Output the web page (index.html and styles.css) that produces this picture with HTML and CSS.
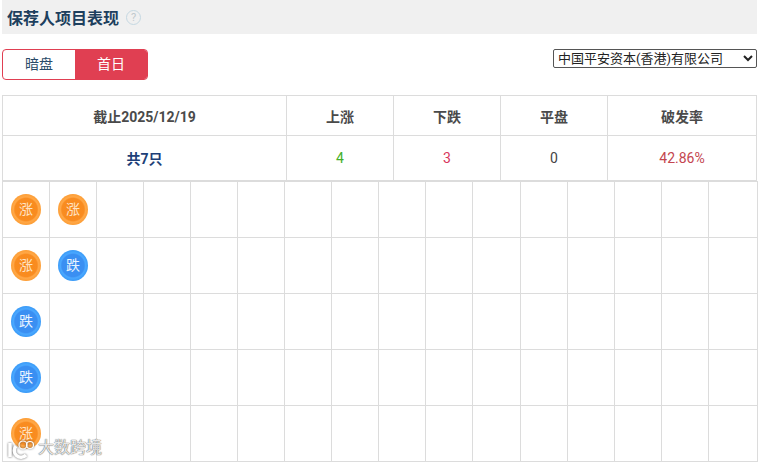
FILE: index.html
```html
<!DOCTYPE html>
<html lang="en">
<head>
	<meta charset="UTF-8">
	<title>保荐人项目表现</title>
	<link rel="stylesheet" href="styles.css">
</head>
<body>
	<div class="title-bar">
		<h3 class="title">保荐人项目表现</h3>
		<span class="help">?</span>
	</div>
	<div class="tools">
		<div class="tabs">
			<div class="tab">暗盘</div>
			<div class="tab on">首日</div>
		</div>
		<select class="sponsor">
			<option>中国平安资本(香港)有限公司</option>
		</select>
	</div>
	<table class="stats">
		<tr>
			<th class="c1">截止2025/12/19</th>
			<th class="c2">上涨</th>
			<th class="c2">下跌</th>
			<th class="c2">平盘</th>
			<th>破发率</th>
		</tr>
		<tr>
			<td class="total">共7只</td>
			<td class="green">4</td>
			<td class="pink">3</td>
			<td>0</td>
			<td class="red">42.86%</td>
		</tr>
	</table>
	<table class="dots">
		<tr>
			<td><span class="dot up">涨</span></td><td><span class="dot up">涨</span></td>
			<td></td><td></td><td></td><td></td><td></td><td></td><td></td><td></td><td></td><td></td><td></td><td></td><td></td><td></td>
		</tr>
		<tr>
			<td><span class="dot up">涨</span></td><td><span class="dot down">跌</span></td>
			<td></td><td></td><td></td><td></td><td></td><td></td><td></td><td></td><td></td><td></td><td></td><td></td><td></td><td></td>
		</tr>
		<tr>
			<td><span class="dot down">跌</span></td><td></td>
			<td></td><td></td><td></td><td></td><td></td><td></td><td></td><td></td><td></td><td></td><td></td><td></td><td></td><td></td>
		</tr>
		<tr>
			<td><span class="dot down">跌</span></td><td></td>
			<td></td><td></td><td></td><td></td><td></td><td></td><td></td><td></td><td></td><td></td><td></td><td></td><td></td><td></td>
		</tr>
		<tr>
			<td><span class="dot up">涨</span></td><td></td>
			<td></td><td></td><td></td><td></td><td></td><td></td><td></td><td></td><td></td><td></td><td></td><td></td><td></td><td></td>
		</tr>
	</table>
	<div class="mark">
		<svg class="mark-logo" width="28" height="22" viewBox="0 0 28 22" fill="none" stroke="#fff" stroke-width="3.5">
			<path d="M3 6v14" />
			<path d="M9 9a6.500 6.500 0 0 0 10 9" />
			<circle cx="16" cy="8" r="4" stroke-width="1.2" />
			<circle cx="23" cy="8" r="3.500" stroke-width="1.2" />
		</svg>
		<span>大数跨境</span>
	</div>
</body>
</html>
```
FILE: styles.css
```css
html, body {
	height: 463px;
	overflow: hidden;
}
body {
	position: relative;
	margin: 0;
	padding: 0 10px 0 2px;
	background: #fff;
	font-family: Roboto, "Noto Sans CJK SC", sans-serif;
	font-size: 14px;
	color: #444;
}
.title-bar {
	display: flex;
	align-items: center;
	gap: 7px;
	height: 34px;
	padding-left: 5px;
	background: #f0f0f0;
}
.title {
	margin: 0;
	font-size: 16px;
	font-weight: 700;
	color: #1d3f5e;
}
.help {
	width: 13px;
	height: 13px;
	border: 1px solid #c5d8e2;
	border-radius: 50%;
	font-size: 11px;
	line-height: 13px;
	text-align: center;
	color: #c0c8cc;
}
.tools {
	display: flex;
	justify-content: space-between;
	align-items: flex-start;
	margin-top: 15px;
}
.tabs {
	display: flex;
	width: 146px;
	height: 31px;
	box-sizing: border-box;
	border: 1px solid #e03f52;
	border-radius: 4px;
	overflow: hidden;
}
.tab {
	flex: 1;
	font-size: 14px;
	line-height: 29px;
	text-align: center;
	color: #2a4a68;
}
.tab.on {
	background: #e03f52;
	color: #fff;
}
.sponsor {
	width: 204px;
	height: 19px;
	padding: 0;
	background: #fff;
	border: 1px solid #555;
	border-radius: 2px;
	font-family: Roboto, "Noto Sans CJK SC", sans-serif;
	font-size: 13px;
	color: #222;
}
table {
	width: 755px;
	table-layout: fixed;
	border-collapse: collapse;
}
td, th {
	border: 1px solid #dcdcdc;
	padding: 0;
	text-align: center;
}
.stats {
	margin-top: 15px;
}
.stats th {
	height: 39px;
	font-size: 14px;
	font-weight: 700;
	color: #4a4a4a;
}
.stats td {
	height: 44px;
	font-size: 14px;
}
.c1 {
	width: 283px;
}
.c2 {
	width: 106px;
}
.stats .total {
	font-weight: 700;
	color: #1d3f78;
}
.green {
	color: #44b02a;
}
.pink {
	color: #d8365c;
}
.red {
	color: #c4454f;
}
.dots td {
	box-sizing: border-box;
	width: 47.06px;
	height: 56px;
	padding: 0 0 1px 8px;
	text-align: left;
}
.dots td:last-child {
	width: 49.1px;
}
.dot {
	display: block;
	width: 30px;
	height: 31px;
	border-radius: 50%;
	font-size: 14px;
	line-height: 31px;
	text-align: center;
}
.dot.up {
	background: radial-gradient(circle closest-side, #f88a1e 0, #f98c20 74%, #ffa848 84%, #fd9f38 100%);
	color: #ffe3c4;
}
.dot.down {
	background: radial-gradient(circle closest-side, #3a8ff2 0, #3a8ff2 74%, #4aa8ff 84%, #3c9cf8 100%);
	color: #eaf4ff;
}
.mark {
	position: absolute;
	left: 7px;
	top: 437px;
	display: flex;
	align-items: center;
	gap: 3px;
	font-size: 16px;
	line-height: 22px;
	color: rgba(255, 255, 255, .85);
	text-shadow: 0 0 1px #666, 0 0 1px #666;
}
.mark-logo {
	filter: drop-shadow(0 0 1px #666);
}
```
